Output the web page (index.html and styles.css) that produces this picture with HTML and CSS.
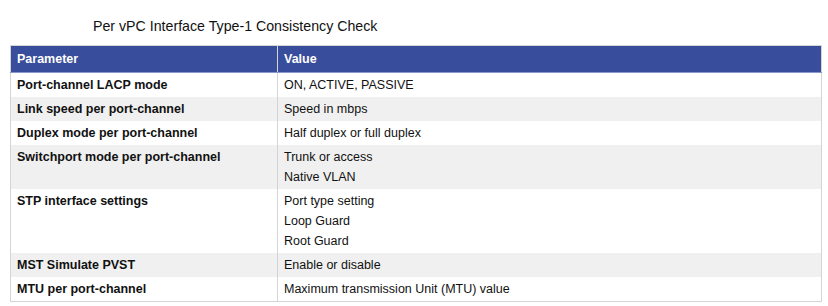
FILE: index.html
```html
<!DOCTYPE html>
<html>
<head>
<meta charset="utf-8">
<link rel="stylesheet" href="styles.css">
</head>
<body>
<div class="page">
  <h1 class="title">Per vPC Interface Type-1 Consistency Check</h1>
  <table class="check">
    <thead>
      <tr><th class="param">Parameter</th><th>Value</th></tr>
    </thead>
    <tbody>
      <tr><td class="param">Port-channel LACP mode</td><td>ON, ACTIVE, PASSIVE</td></tr>
      <tr class="alt"><td class="param">Link speed per port-channel</td><td>Speed in mbps</td></tr>
      <tr><td class="param">Duplex mode per port-channel</td><td>Half duplex or full duplex</td></tr>
      <tr class="alt"><td class="param">Switchport mode per port-channel</td><td>Trunk or access<br>Native VLAN</td></tr>
      <tr><td class="param">STP interface settings</td><td>Port type setting<br>Loop Guard<br>Root Guard</td></tr>
      <tr class="alt"><td class="param">MST Simulate PVST</td><td>Enable or disable</td></tr>
      <tr><td class="param">MTU per port-channel</td><td>Maximum transmission Unit (MTU) value</td></tr>
    </tbody>
  </table>
</div>
</body>
</html>
```

FILE: styles.css
```css
html, body {
  margin: 0;
  padding: 0;
  background: #ffffff;
}
body {
  font-family: "Liberation Sans", Arial, sans-serif;
  color: #111111;
}
.page {
  padding: 18px 6px 0 10px;
}
.title {
  margin: 0 0 11px 83px;
  font-size: 14.2px;
  font-weight: normal;
  line-height: 16px;
  color: #111111;
}
.check {
  width: 812px;
  border-collapse: collapse;
  border: 1px solid #d4d4d4;
  font-size: 12.5px;
  line-height: 20px;
}
.check th, .check td {
  padding: 2px 6px;
  text-align: left;
  vertical-align: top;
}
.check th {
  padding: 3px 6px;
  background: #384d9c;
  color: #ffffff;
  font-weight: bold;
  border-bottom: 1px solid #8a97c8;
}
.check .param {
  width: 254px;
  border-right: 1px solid #d4d4d4;
}
.check td.param {
  font-weight: bold;
}
.check tr.alt td {
  background: #f0f0f0;
}
```
